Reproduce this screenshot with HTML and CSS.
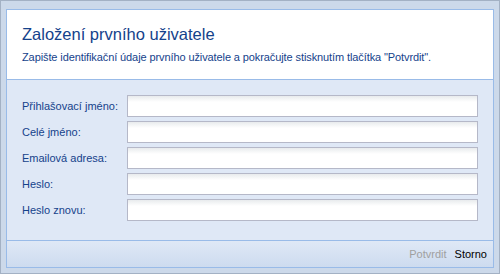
FILE: index.html
```html
<!DOCTYPE html>
<html lang="cs">
<head>
  <meta charset="UTF-8">
  <meta name="viewport" content="width=device-width, initial-scale=1.0">
  <title>Založení prvního uživatele</title>
  <link rel="stylesheet" href="styles.css">
</head>
<body>
  <div class="window">
    <div class="window-body">
      <!-- Header with title and hint -->
      <div class="window-header">
        <h1>Založení prvního uživatele</h1>
        <p>Zapište identifikační údaje prvního uživatele a pokračujte stisknutím tlačítka "Potvrdit".</p>
      </div>

      <!-- User form -->
      <form class="user-form">
        <div class="form-row">
          <label for="login">Přihlašovací jméno:</label>
          <input type="text" id="login">
        </div>
        <div class="form-row">
          <label for="fullname">Celé jméno:</label>
          <input type="text" id="fullname">
        </div>
        <div class="form-row">
          <label for="email">Emailová adresa:</label>
          <input type="text" id="email">
        </div>
        <div class="form-row">
          <label for="password">Heslo:</label>
          <input type="password" id="password">
        </div>
        <div class="form-row">
          <label for="password2">Heslo znovu:</label>
          <input type="password" id="password2">
        </div>
      </form>

      <!-- Buttons -->
      <div class="window-footer">
        <span class="btn btn-disabled">Potvrdit</span>
        <span class="btn">Storno</span>
      </div>
    </div>
  </div>
</body>
</html>
```

FILE: styles.css
```css
body {
  margin: 0;
  font-family: "Liberation Sans", Arial, sans-serif;
  font-size: 11px;
}
.window {
  width: 500px;
  height: 274px;
  box-sizing: border-box;
  border: 1px solid #a3b1c4;
  background-color: #ccd9ea;
  padding: 8px 5px 5px 5px;
}
.window-body {
  height: 100%;
  box-sizing: border-box;
  border: 1px solid #99bbe8;
  display: flex;
  flex-direction: column;
}
.window-header {
  height: 70px;
  box-sizing: border-box;
  background-color: #fff;
  border-bottom: 1px solid #99bbe8;
  padding: 14px 15px 0;
}
.window-header h1 {
  margin: 0;
  font-size: 16.5px;
  font-weight: normal;
  line-height: 20px;
  color: #15428b;
}
.window-header p {
  margin: 6px 0 0;
  font-size: 11px;
  line-height: 14px;
  letter-spacing: -0.1px;
  color: #15428b;
}
.user-form {
  background-color: #dfe8f6;
  padding: 15px 15px 19px 15px;
  display: flex;
  flex-direction: column;
  gap: 4px;
}
.form-row {
  display: flex;
  align-items: center;
  height: 22px;
}
.form-row label {
  width: 105px;
  flex-shrink: 0;
  color: #15428b;
  line-height: 22px;
}
.form-row input {
  flex: 1;
  height: 22px;
  box-sizing: border-box;
  margin: 0;
  border: 1px solid #b5b8c8;
  background: linear-gradient(#e8ebed, #fff 6px);
  font-family: inherit;
  font-size: 11px;
  outline: none;
}
.window-footer {
  flex: 1;
  border-top: 1px solid #99bbe8;
  background: linear-gradient(#dfe8f6, #cddbef);
  display: flex;
  justify-content: flex-end;
  align-items: center;
  gap: 8px;
  padding: 0 6px 0 0;
}
.btn {
  color: #000;
  font-size: 11px;
}
.btn-disabled {
  color: #a0a0a0;
}
```
